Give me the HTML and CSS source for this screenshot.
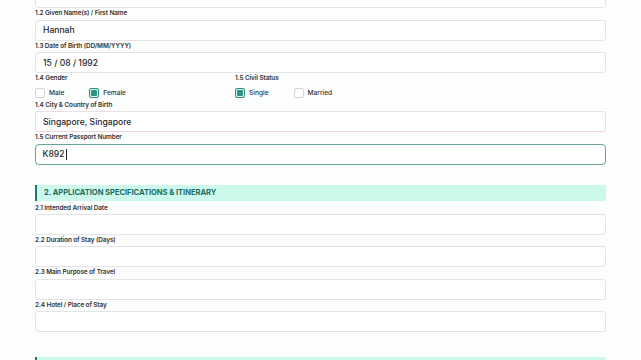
FILE: index.html
```html
<!DOCTYPE html>
<html lang="en">
<head>
<meta charset="utf-8">
<title>Visa Application</title>
<link rel="stylesheet" href="styles.css">
</head>
<body>
<div class="page">
  <div class="form">
    <div class="field first">
      <div class="input"></div>
    </div>
    <div class="field">
      <div class="label">1.2 Given Name(s) / First Name</div>
      <div class="input">Hannah</div>
    </div>
    <div class="field">
      <div class="label">1.3 Date of Birth (DD/MM/YYYY)</div>
      <div class="input">15 / 08 / 1992</div>
    </div>
    <div class="choice-row">
      <div class="group">
        <div class="label">1.4 Gender</div>
        <div class="opts">
          <span class="opt"><span class="box"></span>Male</span>
          <span class="opt"><span class="box checked"></span>Female</span>
        </div>
      </div>
      <div class="group">
        <div class="label">1.5 Civil Status</div>
        <div class="opts">
          <span class="opt"><span class="box checked"></span>Single</span>
          <span class="opt"><span class="box"></span>Married</span>
        </div>
      </div>
    </div>
    <div class="field">
      <div class="label">1.4 City &amp; Country of Birth</div>
      <div class="input warn">Singapore, Singapore</div>
    </div>
    <div class="field">
      <div class="label">1.5 Current Passport Number</div>
      <div class="input focus">K892<span class="caret"></span></div>
    </div>

    <div class="section-head">2. APPLICATION SPECIFICATIONS &amp; ITINERARY</div>

    <div class="field">
      <div class="label">2.1 Intended Arrival Date</div>
      <div class="input"></div>
    </div>
    <div class="field">
      <div class="label">2.2 Duration of Stay (Days)</div>
      <div class="input"></div>
    </div>
    <div class="field">
      <div class="label">2.3 Main Purpose of Travel</div>
      <div class="input"></div>
    </div>
    <div class="field">
      <div class="label">2.4 Hotel / Place of Stay</div>
      <div class="input"></div>
    </div>

    <div class="section-head next"></div>
  </div>
</div>
</body>
</html>
```

FILE: styles.css
```css
html, body {
  margin: 0;
  padding: 0;
  background: #fcfdfd;
  overflow: hidden;
}

.page {
  width: 641px;
  height: 360px;
  overflow: hidden;
  font-family: Inter, "Noto Sans", sans-serif;
  color: #222;
}

.form {
  margin: -13px 0 0 35px;
  width: 571px;
  display: flex;
  flex-direction: column;
}

.field {
  display: flex;
  flex-direction: column;
}

.label {
  height: 11px;
  line-height: 11px;
  font-size: 6.4px;
  font-weight: 600;
  color: #333;
  letter-spacing: -0.1px;
}

.input {
  box-sizing: border-box;
  height: 21px;
  border: 1px solid #e4e4e4;
  border-radius: 3px;
  background: #fff;
  padding: 0 7px;
  display: flex;
  align-items: center;
  font-size: 8.6px;
  font-weight: 500;
  color: #1f1f1f;
}

.input.warn {
  border-color: #eadfe1;
  border-bottom-color: #f2d6da;
}

.input.focus {
  border: 1.5px solid #66a39c;
  border-radius: 4px;
  padding-left: 6.5px;
}

.caret {
  display: inline-block;
  width: 1px;
  height: 11px;
  background: #222;
  margin-left: 1px;
}

.choice-row {
  display: grid;
  grid-template-columns: 200px 1fr;
  height: 27px;
}

.group {
  display: flex;
  flex-direction: column;
}

.opts {
  display: flex;
  gap: 25px;
  align-items: center;
  height: 14px;
  margin-top: 2px;
}

.opt {
  display: flex;
  align-items: center;
  gap: 4px;
  font-size: 6.6px;
  font-weight: 500;
  color: #333;
}

.box {
  box-sizing: border-box;
  width: 10px;
  height: 10px;
  border: 1px solid #d3d3d3;
  border-radius: 2px;
  background: #fff;
  display: flex;
  align-items: center;
  justify-content: center;
}

.box.checked {
  border-color: #2f8c80;
  background: #d9f3ee;
}

.box.checked::after {
  content: "";
  width: 6px;
  height: 6px;
  border-radius: 1px;
  background: #2c9484;
}

.section-head {
  box-sizing: border-box;
  margin-top: 20px;
  height: 16px;
  background: #cdf8ec;
  border-left: 2px solid #1d7a6b;
  padding-left: 7px;
  display: flex;
  align-items: center;
  font-size: 7.6px;
  font-weight: 700;
  color: #1e6c60;
  letter-spacing: -0.05px;
}

.section-head + .field .label {
  height: 13px;
  line-height: 15px;
}

.field + .field .label,
.section-head ~ .field + .field .label {
  height: 11.5px;
  line-height: 11.5px;
}

.section-head.next {
  margin-top: 25px;
}
```
